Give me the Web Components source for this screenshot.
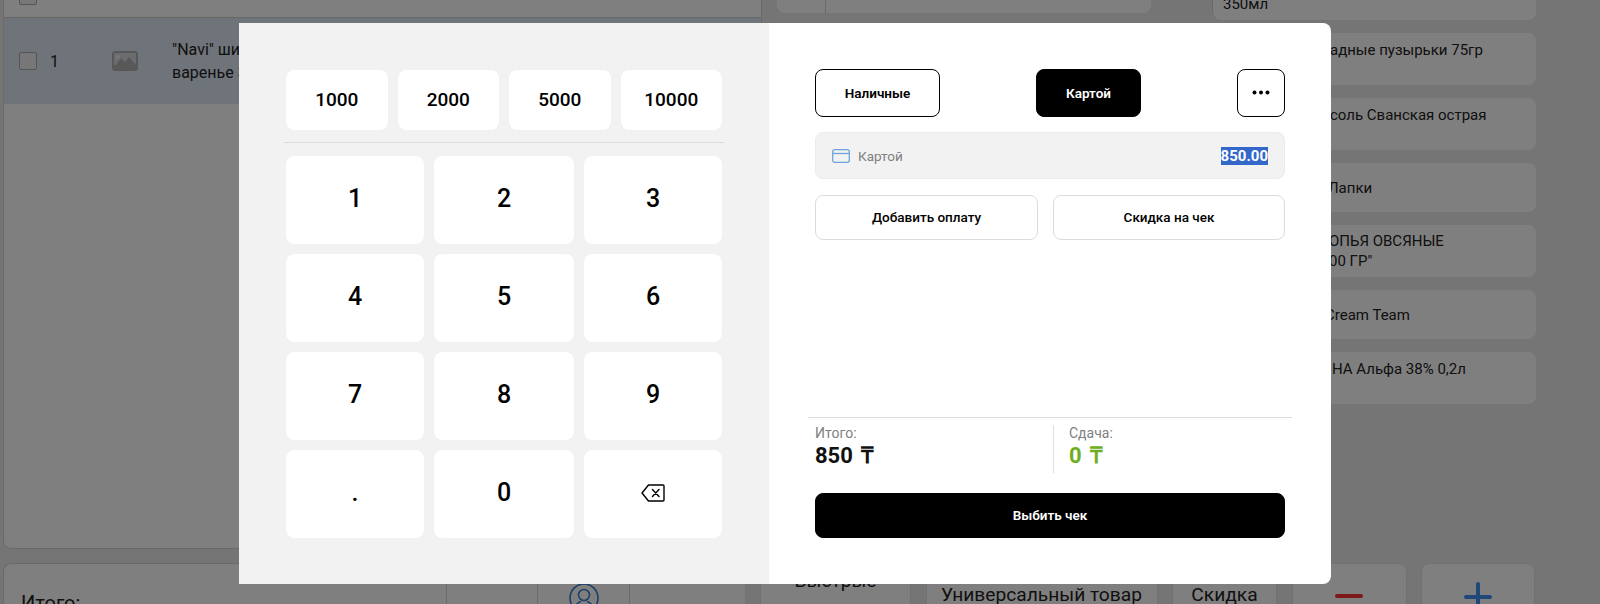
<!DOCTYPE html>
<html lang="ru">
<head>
<meta charset="utf-8">
<title>Оплата</title>
<style>
html, body { margin: 0; height: 100%; overflow: hidden; background: #ebebeb; }
body { font-family: Roboto, "Liberation Sans", sans-serif; color: #222; }
</style>
</head>
<body>
<pos-screen></pos-screen>
<script>
const define = (name, css, html, setup) => {
    const template = document.createElement('template');
    template.innerHTML = `<style>${css}</style>${html}`;
    customElements.define(name, class extends HTMLElement {
        constructor() {
            super();
            const root = this.attachShadow({mode: 'open'});
            root.appendChild(template.content.cloneNode(true));
        }
        connectedCallback() {
            if (setup) setup(this);
        }
    });
};

// background page

define('cart-row', `
    :host { display: flex; align-items: center; height: 86px; background: #dfe9f4; font-size: 16px; line-height: 23px; }
    .check { width: 16px; height: 16px; margin-left: 15px; border: 1px solid #aaa; border-radius: 2px; background: #eee; }
    .num { width: 23px; margin-left: 13px; margin-right: 39px; font-size: 16px; }
    svg { width: 26px; height: 20px; margin-right: 34px; }
`, `
    <div class="check"></div>
    <div class="num">1</div>
    <svg viewBox="0 0 26 20"><rect width="26" height="20" rx="3" fill="#b0b0b0"/><rect x="2" y="2" width="22" height="12" fill="#d5d9de"/><path d="M2 16 L9 7 L13 11 L17 6 L24 14 V18 H2 Z" fill="#b0b0b0"/><circle cx="6" cy="6" r="2" fill="#eceff2"/></svg>
    <div>"Navi" шипучка<br>варенье 300</div>
`);

define('goods-tile', `
    :host { display: flex; align-items: center; box-sizing: border-box; background: #fff; border-radius: 8px; font-size: 15px; line-height: 20px; white-space: nowrap; }
    :host([top]) { align-items: flex-start; padding-top: 7px; }
`, `<slot></slot>`, el => {
    el.style.height = el.getAttribute('h') + 'px';
    el.style.paddingLeft = el.getAttribute('x') + 'px';
});

define('bottom-cell', `
    :host { display: block; box-sizing: border-box; height: 41px; overflow: hidden; background: #fff; border-left: 1px solid #d4d4d4; text-align: center; }
`, `<slot></slot>`, el => {
    el.style.width = el.getAttribute('w') + 'px';
});

define('bottom-action', `
    :host { display: block; box-sizing: border-box; height: 60px; overflow: hidden; background: #fff; border: 1px solid #e2e2e2; border-radius: 8px 8px 0 0; text-align: center; font-size: 19.2px; line-height: 24px; white-space: nowrap; }
`, `<slot></slot>`, el => {
    el.style.width = el.getAttribute('w') + 'px';
    el.style.paddingTop = el.getAttribute('t') + 'px';
});

define('pos-page', `
    :host { display: flex; flex-direction: column; gap: 14px; width: 1600px; height: 604px; overflow: hidden; }
    .top { display: flex; flex: none; height: 549px; }
    .cart { box-sizing: border-box; width: 759px; margin-left: 3px; background: #fff; border: 1px solid #d4d4d4; border-top: 0; border-radius: 0 0 8px 8px; overflow: hidden; }
    .head { display: flex; height: 17px; border-bottom: 1px solid #cfcfcf; overflow: hidden; }
    .head i { display: block; width: 16px; height: 16px; margin: -13px 0 0 15px; border: 1px solid #aaa; border-radius: 2px; background: #eee; }
    .middle { display: flex; width: 374px; height: 13px; margin-left: 15px; background: #fff; border-radius: 0 0 8px 8px; }
    .middle i { display: block; width: 48px; border-right: 1px solid #d4d4d4; }
    .tiles { display: flex; flex-direction: column; gap: 13px; width: 324px; margin-left: 61px; }
    .first { height: 20px; border-left: 1px solid #d4d4d4; background: #fff; border-radius: 0 0 8px 8px; padding-left: 10px; font-size: 15px; line-height: 9px; }
    .bottom { display: flex; flex: none; margin-left: 3px; }
    .total { box-sizing: border-box; width: 443px; height: 41px; padding: 27px 0 0 17px; background: #fff; border: 1px solid #d4d4d4; border-bottom: 0; border-right: 0; border-radius: 8px 0 0 0; font-size: 20px; line-height: 24px; }
    .actions { display: flex; margin-left: 15px; gap: 14.5px; }
    svg { display: block; margin: 20px auto 0; }
    .cells { display: flex; }
`, `
    <div class="top">
        <div class="cart">
            <div class="head"><i></i></div>
            <cart-row></cart-row>
        </div>
        <div class="middle"><i></i></div>
        <div class="tiles">
            <div class="first">350мл</div>
            <goods-tile h="52" x="118" top>адные пузырьки 75гр</goods-tile>
            <goods-tile h="52" x="118" top>соль Сванская острая</goods-tile>
            <goods-tile h="49" x="116">Лапки</goods-tile>
            <goods-tile h="52" x="117">ОПЬЯ ОВСЯНЫЕ<br>00 ГР"</goods-tile>
            <goods-tile h="49" x="113">Cream Team</goods-tile>
            <goods-tile h="52" x="120" top>НА Альфа 38% 0,2л</goods-tile>
        </div>
    </div>
    <div class="bottom">
        <div class="cells">
            <div class="total">Итого:</div>
            <bottom-cell w="91"></bottom-cell>
            <bottom-cell w="92">
                <svg width="30" height="30" viewBox="0 0 30 30" fill="none" stroke="#3f7fd0" stroke-width="1.6"><circle cx="15" cy="15" r="14"/><circle cx="15" cy="12" r="5.5"/><path d="M6 25 C7 20 10 19 12 18.5 M24 25 C23 20 20 19 18 18.5"/></svg>
            </bottom-cell>
            <bottom-cell w="116"></bottom-cell>
        </div>
        <div class="actions">
            <bottom-action w="151" t="5">Быстрые</bottom-action>
            <bottom-action w="232" t="19">Универсальный товар</bottom-action>
            <bottom-action w="105" t="19">Скидка</bottom-action>
            <bottom-action w="115" t="0"><svg width="28" height="4" viewBox="0 0 28 4" style="margin-top:30px"><rect width="28" height="4" rx="2" fill="#ff3030"/></svg></bottom-action>
            <bottom-action w="114" t="0"><svg width="28" height="30" viewBox="0 0 28 30" style="margin-top:18px"><rect y="13" width="28" height="4" rx="2" fill="#3f90f0"/><rect x="12" width="4" height="30" rx="2" fill="#3f90f0"/></svg></bottom-action>
        </div>
    </div>
`);

// payment dialog, left side

define('cash-key', `
    :host { display: flex; align-items: center; justify-content: center; background: #fff; border-radius: 8px; font-weight: 500; color: #000; box-shadow: 0 0 1px #e4e4e4; }
    :host([preset]) { height: 60px; font-size: 19px; padding-bottom: 1px; box-sizing: border-box; }
    :host(:not([preset])) { height: 88.5px; font-size: 25px; padding-bottom: 3px; box-sizing: border-box; }
`, `<slot></slot>`);

define('cash-pad', `
    :host { display: block; box-sizing: border-box; width: 530px; padding: 47px 47px 0; background: #f2f2f2; }
    .presets { display: grid; grid-template-columns: repeat(4, 1fr); gap: 10px; }
    hr { height: 1px; margin: 12px -2px 12.5px; border: 0; background: #dcdcdc; }
    .keys { display: grid; grid-template-columns: 138px 140px 138px; gap: 9.5px 10px; }
    svg { display: block; margin-top: 1px; }
`, `
    <div class="presets">
        <cash-key preset>1000</cash-key>
        <cash-key preset>2000</cash-key>
        <cash-key preset>5000</cash-key>
        <cash-key preset>10000</cash-key>
    </div>
    <hr>
    <div class="keys">
        <cash-key>1</cash-key><cash-key>2</cash-key><cash-key>3</cash-key>
        <cash-key>4</cash-key><cash-key>5</cash-key><cash-key>6</cash-key>
        <cash-key>7</cash-key><cash-key>8</cash-key><cash-key>9</cash-key>
        <cash-key>.</cash-key><cash-key>0</cash-key>
        <cash-key>
            <svg width="24" height="18" viewBox="0 0 24 18" fill="none" stroke="#000" stroke-width="1.4" stroke-linejoin="round" stroke-linecap="round"><path d="M7.5 1 H22 A1 1 0 0 1 23 2 V16 A1 1 0 0 1 22 17 H7.5 L1 9 Z"/><path d="M11.5 5.5 L18 12.5 M18 5.5 L11.5 12.5"/></svg>
        </cash-key>
    </div>
`);

// payment dialog, right side

define('pay-button', `
    :host { display: flex; align-items: center; justify-content: center; box-sizing: border-box; height: 48px; padding-bottom: 1px; background: #fff; border: 1px solid #000; border-radius: 8px; font-size: 13.5px; font-weight: 600; color: #000; }
    :host([dark]) { background: #000; color: #fff; }
    :host([light]) { height: 45px; padding-bottom: 2px; border-color: #dcdcdc; font-weight: 500; }
`, `<slot></slot>`);

define('pay-input', `
    :host { display: flex; align-items: center; box-sizing: border-box; height: 47px; margin-top: 15px; padding: 0 16px 0 16px; background: #f2f2f2; border: 1px solid #ebebeb; border-radius: 8px; font-size: 13.5px; color: #808080; }
    svg { margin-right: 8px; }
    .value { margin-left: auto; font-size: 15px; line-height: 18px; font-weight: 700; color: #fff; background: #3367c9; }
`, `
    <svg width="18" height="14" viewBox="0 0 18 14" fill="none" stroke="#6fa5dc" stroke-width="1.3"><rect x="0.7" y="0.7" width="16.6" height="12.6" rx="2"/><path d="M0.7 4.5 H17.3"/></svg>
    <span>Картой</span>
    <span class="value">850.00</span>
`);

define('pay-total', `
    :host { display: block; color: #808080; font-size: 14px; line-height: 16px; }
    .sum { margin-top: 2px; font-size: 22px; line-height: 25px; font-weight: 700; color: var(--sum, #111); }
`, `<div><slot name="label"></slot></div><div class="sum"><slot name="sum"></slot></div>`);

define('pay-panel', `
    :host { display: flex; flex-direction: column; box-sizing: border-box; width: 562px; padding: 46px 46px 46px; background: #fff; border-radius: 0 8px 8px 0; }
    .methods { display: flex; justify-content: space-between; }
    .extras { display: flex; justify-content: space-between; margin-top: 16px; }
    .foot { margin: auto -7px 0; border-top: 1px solid #dedede; }
    .totals { display: flex; height: 48px; margin-top: 7px; padding: 0 7px; }
    .totals > :first-child { width: 238px; }
    .totals > :last-child { padding-left: 15px; border-left: 1px solid #dedede; }
    .check { margin: 19.5px 7px 0; }
    .tenge { font-size: 23px; margin-left: 3px; }
`, `
    <div class="methods">
        <pay-button style="width:125px">Наличные</pay-button>
        <pay-button dark style="width:105px">Картой</pay-button>
        <pay-button style="width:48px">
            <svg width="18" height="5" viewBox="0 0 18 5" fill="#000"><circle cx="2.5" cy="2.5" r="2"/><circle cx="9" cy="2.5" r="2"/><circle cx="15.5" cy="2.5" r="2"/></svg>
        </pay-button>
    </div>
    <pay-input></pay-input>
    <div class="extras">
        <pay-button light style="width:223px">Добавить оплату</pay-button>
        <pay-button light style="width:232px">Скидка на чек</pay-button>
    </div>
    <div class="foot">
        <div class="totals">
            <pay-total><span slot="label">Итого:</span><span slot="sum">850 <span class="tenge">₸</span></span></pay-total>
            <pay-total style="--sum:#6eae1f"><span slot="label">Сдача:</span><span slot="sum">0 <span class="tenge">₸</span></span></pay-total>
        </div>
        <div class="check"><pay-button dark style="height:45.5px">Выбить чек</pay-button></div>
    </div>
`);

define('pay-dialog', `
    :host { position: absolute; inset: 0; background: rgba(0, 0, 0, .5); }
    .box { display: flex; width: 1092px; height: 561px; margin: 23px 0 0 239px; }
`, `
    <div class="box">
        <cash-pad></cash-pad>
        <pay-panel></pay-panel>
    </div>
`);

define('pos-screen', `
    :host { display: block; position: relative; width: 1600px; height: 604px; overflow: hidden; }
`, `
    <pos-page></pos-page>
    <pay-dialog></pay-dialog>
`);
</script>
</body>
</html>
